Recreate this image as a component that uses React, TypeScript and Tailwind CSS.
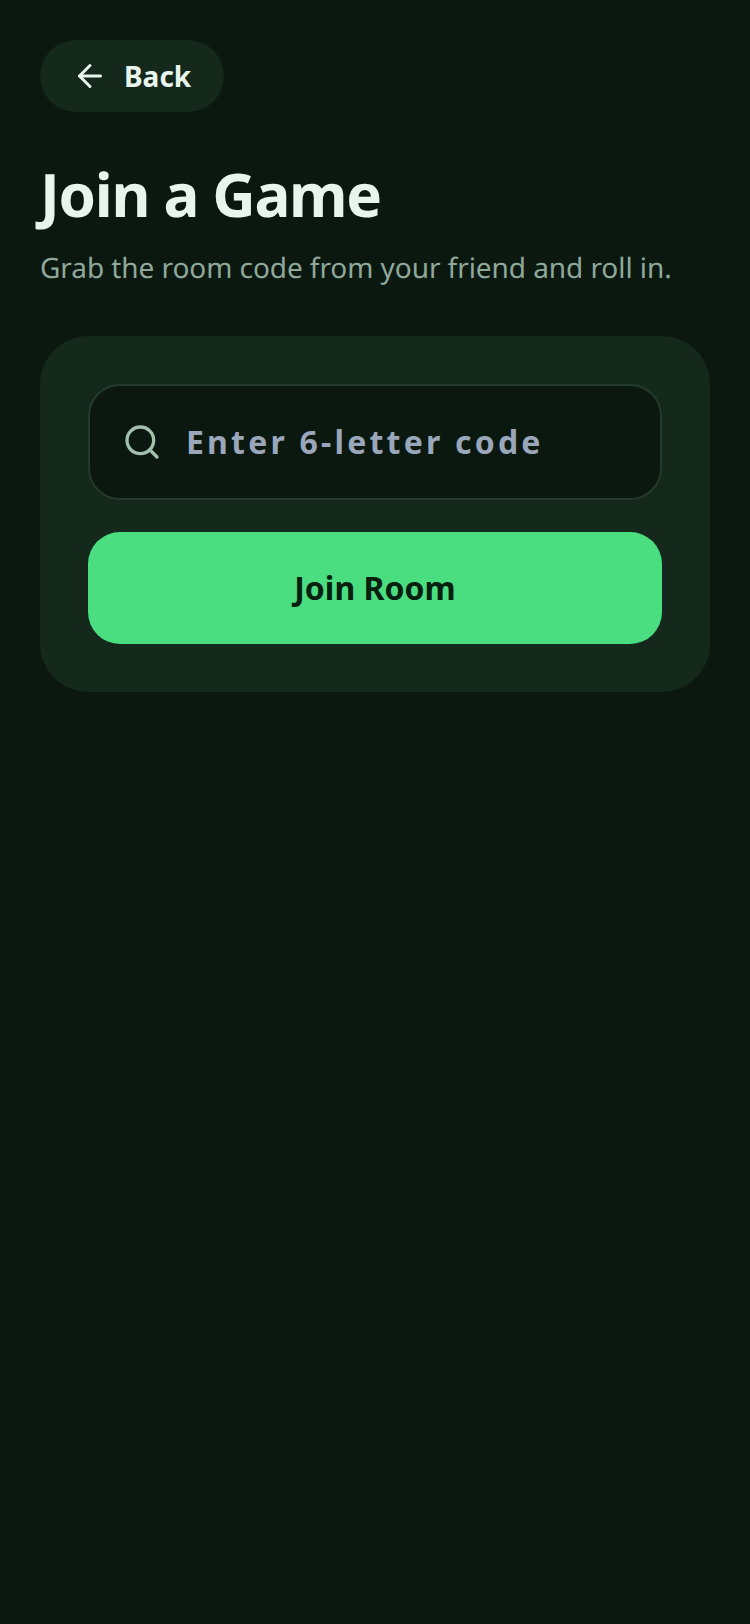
import { ArrowLeft, Search } from "lucide-react";

export default function App() {
  return (
    <div className="min-h-[1624px] bg-[#0b1810] px-10 pt-10 font-['Noto_Sans',sans-serif] opacity-[0.999] [text-rendering:geometricPrecision]">
      <button className="flex h-[72px] w-[184px] items-center gap-4 rounded-[36px] bg-[#14281c] px-8 text-[#e8f5ec]">
        <ArrowLeft size={36} strokeWidth={2} />
        <span className="text-[28px] font-bold">Back</span>
      </button>
      <h1 className="mt-12 text-[60px] leading-[68px] font-bold tracking-[-1.3px] text-[#e8f5ec]">Join a Game</h1>
      <p className="mt-[19px] text-[28px] leading-[42px] tracking-[-0.065px] text-[#8fa89a]">Grab the room code from your friend and roll in.</p>
      <div className="mt-[47px] flex flex-col gap-8 rounded-[48px] bg-[#14281c] p-12">
        <label className="flex h-[116px] items-center gap-6 rounded-[32px] border-2 border-[#233a2c] bg-[#0b1810] px-8">
          <Search size={40} strokeWidth={2} className="shrink-0 text-[#a3bfae]" />
          <input
            placeholder="Enter 6-letter code"
            className="w-full bg-transparent text-[32px] font-bold tracking-[3.2px] text-[#e8f5ec] outline-none placeholder:text-[#9aa6ba]"
          />
        </label>
        <button className="h-[112px] rounded-[32px] bg-[#4ade80] text-[32px] font-bold text-[#06200f]">Join Room</button>
      </div>
    </div>
  );
}
